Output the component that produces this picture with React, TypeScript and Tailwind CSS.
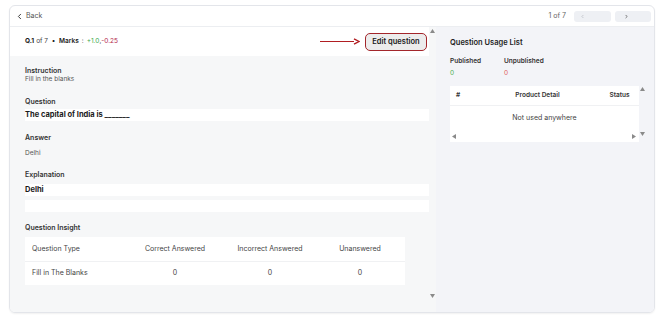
import { ChevronLeft, ChevronRight } from 'lucide-react';

const Triangle = ({ dir }: { dir: 'up' | 'down' | 'left' | 'right' }) => {
  const pts = {
    up: '1,5 3.5,1 6,5',
    down: '1,1 3.5,5 6,1',
    left: '5,1 1,3.5 5,6',
    right: '1,1 5,3.5 1,6',
  }[dir];
  return (
    <svg width="7" height="7" viewBox="0 0 7 7">
      <polygon points={pts} fill="#8a8a8a" />
    </svg>
  );
};

const Label = ({ children }: { children: React.ReactNode }) => (
  <div className="text-[7px] font-semibold text-[#333333] leading-[9px]">{children}</div>
);

const App = () => {
  return (
    <div
      className="w-[670px] h-[320px] bg-white pl-[9px] pr-[15px] pt-[5px] pb-[7px]"
      style={{ fontFamily: 'Inter, "Noto Sans", sans-serif' }}
    >
      <div className="h-full flex flex-col rounded-md border border-[#e3e5ea] shadow-[0_1px_2px_rgba(0,0,0,0.06)] overflow-hidden">
        {/* header */}
        <div className="h-[21px] shrink-0 flex items-center justify-between border-b border-[#eceef1] pl-[5px] pr-[3px]">
          <div className="flex items-center gap-[2px] text-[7px] text-[#555555]">
            <ChevronLeft size={9} strokeWidth={2.5} className="text-[#333333]" />
            <span>Back</span>
          </div>
          <div className="flex items-center">
            <span className="text-[7px] text-[#666666] mr-[8px]">1 of 7</span>
            <button className="w-[37px] h-[11px] rounded-[3px] bg-[#eef0f4] flex items-center pl-[6px] mr-[4px]">
              <ChevronLeft size={5} strokeWidth={3} className="text-[#b0b4bb]" />
            </button>
            <button className="w-[36px] h-[11px] rounded-[3px] bg-[#eef0f4] flex items-center pl-[9px]">
              <ChevronRight size={5} strokeWidth={3} className="text-[#333333]" />
            </button>
          </div>
        </div>

        {/* body */}
        <div className="flex flex-1 min-h-0">
          {/* left */}
          <div className="w-[420px] flex flex-col">
            <div className="h-[29px] shrink-0 bg-white flex items-center justify-between pl-[15px] pr-[2px]">
              <div className="text-[6.5px] text-[#444444] flex items-center">
                <span className="font-bold text-[#1a1a1a]">Q.1</span>
                <span className="ml-[2px]">of 7</span>
                <span className="mx-[4px] font-bold text-[#1a1a1a]">•</span>
                <span className="font-semibold text-[#1a1a1a]">Marks</span>
                <span className="mx-[3px]">:</span>
                <span className="text-[#3aa84a]">+1.0</span>
                <span>,</span>
                <span className="text-[#b3264a]">-0.25</span>
              </div>
              <div className="flex items-center">
                <div className="flex items-center">
                  <div className="w-[34px] h-[1.5px] bg-[#b11e22]" />
                  <svg width="7" height="7" viewBox="0 0 7 7" className="-ml-[1px]">
                    <path d="M1 0.8 L6 3.5 L1 6.2" fill="none" stroke="#b11e22" strokeWidth="1.4" />
                  </svg>
                </div>
                <button className="ml-[5px] w-[62px] h-[18px] rounded-[5px] border border-[#a3262b] bg-[#ececec] text-[7.5px] font-semibold text-[#1a1a1a]">
                  Edit question
                </button>
              </div>
            </div>
            <div className="flex-1 bg-[#f6f7f8] pl-[15px] pt-[10px] flex flex-col">
              <Label>Instruction</Label>
              <div className="text-[6.5px] text-[#555555] leading-[9px]">Fill in the blanks</div>

              <div className="mt-[13px]"><Label>Question</Label></div>
              <div className="mt-[3px] h-[12px] bg-white flex items-center text-[7.5px] font-bold text-[#1a1a1a]">
                The capital of India is _______
              </div>

              <div className="mt-[12px]"><Label>Answer</Label></div>
              <div className="mt-[7px] text-[6.5px] text-[#555555] leading-[9px]">Delhi</div>

              <div className="mt-[12px]"><Label>Explanation</Label></div>
              <div className="mt-[5px] h-[12px] bg-white flex items-center text-[7.5px] font-bold text-[#1a1a1a]">
                Delhi
              </div>
              <div className="mt-[4px] h-[12px] bg-white" />

              <div className="mt-[11px]"><Label>Question Insight</Label></div>
              <div className="mt-[5px] w-[380px] bg-white text-[7px] text-[#444444]">
                <div className="h-[25px] grid grid-cols-[100px_100px_90px_90px] items-center border-b border-[#f0f1f3]">
                  <span className="pl-[7px]">Question Type</span>
                  <span className="text-center">Correct Answered</span>
                  <span className="text-center">Incorrect Answered</span>
                  <span className="text-center">Unanswered</span>
                </div>
                <div className="h-[23px] grid grid-cols-[100px_100px_90px_90px] items-center">
                  <span className="pl-[7px]">Fill in The Blanks</span>
                  <span className="text-center">0</span>
                  <span className="text-center">0</span>
                  <span className="text-center">0</span>
                </div>
              </div>
            </div>
          </div>

          {/* scrollbar */}
          <div className="w-[7px] bg-[#f6f7f8] flex flex-col justify-between items-center pt-[1px] pb-[12px]">
            <Triangle dir="up" />
            <Triangle dir="down" />
          </div>

          {/* right */}
          <div className="flex-1 bg-[#f3f4f8] pl-[14px] pr-[9px] pt-[11px]">
            <div className="text-[7.5px] font-semibold text-[#222222] leading-[10px]">Question Usage List</div>
            <div className="mt-[9px] flex text-[6.5px] leading-[9px]">
              <div className="w-[54px]">
                <div className="font-semibold text-[#333333]">Published</div>
                <div className="mt-[3px] text-[#4caf50]">0</div>
              </div>
              <div>
                <div className="font-semibold text-[#333333]">Unpublished</div>
                <div className="mt-[3px] text-[#e06060]">0</div>
              </div>
            </div>
            <div className="mt-[8px] flex">
              <div className="w-[189px] h-[56px] bg-white flex flex-col">
                <div className="h-[20px] flex items-center text-[6.5px] font-semibold text-[#333333] border-b border-[#f0f1f3]">
                  <span className="w-[45px] pl-[6px]">#</span>
                  <span className="w-[85px] text-center">Product Detail</span>
                  <span className="flex-1 text-center pl-[20px]">Status</span>
                </div>
                <div className="h-[24px] flex items-center justify-center text-[7px] text-[#444444]">
                  Not used anywhere
                </div>
                <div className="flex-1 flex items-center justify-between px-[1px]">
                  <Triangle dir="left" />
                  <Triangle dir="right" />
                </div>
              </div>
              <div className="w-[6px] h-[52px] flex flex-col justify-between items-center">
                <Triangle dir="up" />
                <Triangle dir="down" />
              </div>
            </div>
          </div>
        </div>
      </div>
    </div>
  );
};

export default App;
